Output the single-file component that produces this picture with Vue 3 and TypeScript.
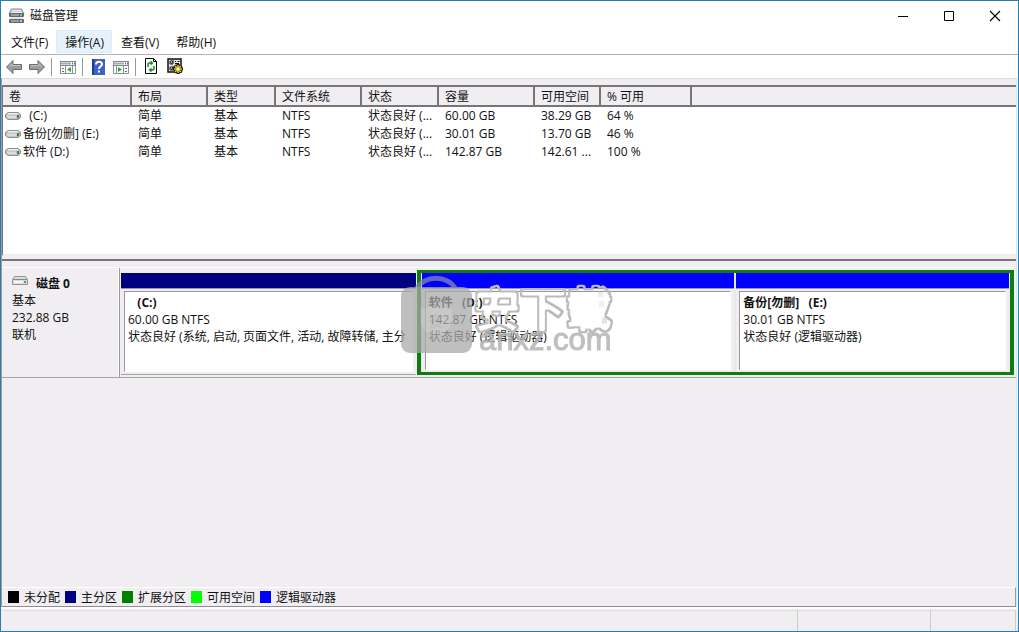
<script setup lang="ts">
import { ref } from 'vue'

interface Volume {
  name: string
  layout: string
  type: string
  fs: string
  status: string
  capacity: string
  free: string
  percent: string
}

const menus = ['文件(F)', '操作(A)', '查看(V)', '帮助(H)']
const activeMenu = ref(1)

const columns = ['卷', '布局', '类型', '文件系统', '状态', '容量', '可用空间', '% 可用']

const volumes: Volume[] = [
  { name: '\u00a0 (C:)', layout: '简单', type: '基本', fs: 'NTFS', status: '状态良好 (...', capacity: '60.00 GB', free: '38.29 GB', percent: '64 %' },
  { name: '备份[勿删] (E:)', layout: '简单', type: '基本', fs: 'NTFS', status: '状态良好 (...', capacity: '30.01 GB', free: '13.70 GB', percent: '46 %' },
  { name: '软件 (D:)', layout: '简单', type: '基本', fs: 'NTFS', status: '状态良好 (...', capacity: '142.87 GB', free: '142.61 ...', percent: '100 %' },
]

const logical = [
  { cls: 'part-d', name: '软件\u00a0\u00a0 (D:)', size: '142.87 GB NTFS', status: '状态良好 (逻辑驱动器)' },
  { cls: 'part-e', name: '备份[勿删]\u00a0\u00a0 (E:)', size: '30.01 GB NTFS', status: '状态良好 (逻辑驱动器)' },
]

const legend = [
  { label: '未分配', cls: 'black' },
  { label: '主分区', cls: 'navy' },
  { label: '扩展分区', cls: 'green' },
  { label: '可用空间', cls: 'lime' },
  { label: '逻辑驱动器', cls: 'blue' },
]
</script>

<template>
  <div class="window">
    <header class="titlebar">
      <svg class="app-icon" width="17" height="16" viewBox="0 0 17 16">
        <path d="M3.500 1h10l2.500 5H1z" fill="#c9cdd0" stroke="#888" />
        <path d="M4 2.500h9M3 4.500h11" stroke="#eee" />
        <rect x="1" y="5" width="15" height="4" rx="1" fill="#626a70" />
        <path d="M3 7h8" stroke="#cfd5d8" />
        <rect x="12" y="6" width="2" height="2" fill="#5fd06a" />
        <path d="M3 9h11l2 2H1z" fill="#e4e6e8" />
        <rect x="1" y="11" width="15" height="4" rx="1" fill="#626a70" />
        <path d="M3 13h8" stroke="#cfd5d8" />
        <rect x="12" y="12" width="2" height="2" fill="#9edca4" />
      </svg>
      <h1>磁盘管理</h1>
      <div class="win-buttons">
        <button type="button" aria-label="最小化">
          <svg width="12" height="12" viewBox="0 0 12 12"><path d="M1 6.500h10" stroke="#000" /></svg>
        </button>
        <button type="button" aria-label="最大化">
          <svg width="12" height="12" viewBox="0 0 12 12"><path d="M1.500 1.500h9v9h-9z" fill="none" stroke="#000" /></svg>
        </button>
        <button type="button" aria-label="关闭">
          <svg width="12" height="12" viewBox="0 0 12 12"><path d="M1 1l10 10M11 1L1 11" stroke="#000" stroke-width="1.100" /></svg>
        </button>
      </div>
    </header>

    <nav class="menubar">
      <button
        v-for="(m, i) in menus"
        :key="m"
        type="button"
        :class="{ active: i === activeMenu }"
        @click="activeMenu = i"
      >{{ m }}</button>
    </nav>

    <div class="toolbar">
      <button type="button" aria-label="后退">
        <svg width="18" height="16" viewBox="0 0 18 16">
          <path d="M1.500 8L8 1.500v4h8.500v5H8v4z" fill="#9c9c9c" stroke="#6c6c6c" />
          <path d="M4 7.500L7 5v1.500h8" fill="none" stroke="#c4c4c4" />
        </svg>
      </button>
      <button type="button" aria-label="前进" class="forward">
        <svg width="18" height="16" viewBox="0 0 18 16">
          <path d="M16.500 8L10 1.500v4H1.500v5H10v4z" fill="#9c9c9c" stroke="#6c6c6c" />
          <path d="M14 7.500L11 5v1.500H3" fill="none" stroke="#c4c4c4" />
        </svg>
      </button>
      <span class="sep"></span>
      <button type="button" aria-label="显示控制台树">
        <svg width="17" height="16" viewBox="0 0 17 16">
          <path d="M.5 2.500h15v12H.5z" fill="#fff" stroke="#8b9199" />
          <path d="M0 2.500h16M0 6.500h16" stroke="#7e8893" />
          <path d="M1 4.500h10" stroke="#a4abb3" stroke-width="2" />
          <path d="M12 4.500h1M14 4.500h1" stroke="#667" stroke-width="2" />
          <path d="M5.500 7v7M12.500 7v7" stroke="#8b9199" />
          <path d="M2 9.500h2M2 12.500h2" stroke="#5f6c86" />
          <path d="M11 8v5l-4-2.500z" fill="#36a32b" />
        </svg>
      </button>
      <span class="sep"></span>
      <button type="button" aria-label="帮助">
        <svg width="14" height="16" viewBox="0 0 14 16">
          <rect x="1" y="0" width="13" height="16" fill="#3b62c4" />
          <path d="M1 0h2v16H1z" fill="#1d3e91" />
          <path d="M5 5.500C5 2 11 2 11 5c0 2.500-3 2.300-3 5" fill="none" stroke="#fff" stroke-width="2" />
          <rect x="7" y="11.500" width="2" height="2" fill="#fff" />
        </svg>
      </button>
      <button type="button" aria-label="显示操作窗格" class="pane-btn">
        <svg width="17" height="16" viewBox="0 0 17 16">
          <path d="M.5 2.500h15v12H.5z" fill="#fff" stroke="#8b9199" />
          <path d="M0 2.500h16M0 6.500h16" stroke="#7e8893" />
          <path d="M1 4.500h10" stroke="#a4abb3" stroke-width="2" />
          <path d="M12 4.500h1M14 4.500h1" stroke="#667" stroke-width="2" />
          <path d="M3.500 7v7M10.500 7v7" stroke="#8b9199" />
          <path d="M12 9.500h2M12 12.500h2" stroke="#5f6c86" />
          <path d="M5 8v5l4-2.500z" fill="#36a32b" />
        </svg>
      </button>
      <span class="sep"></span>
      <button type="button" aria-label="刷新">
        <svg width="14" height="17" viewBox="0 0 14 17">
          <path d="M1.500.500h8l3 3v12h-11z" fill="#fff" stroke="#000" />
          <path d="M9.500.500v3h3" fill="none" stroke="#000" />
          <path d="M4 9V6.500Q4 5 6 5h1" fill="none" stroke="#178a24" stroke-width="1.500" />
          <path d="M6.500 2.500l3 2.500-3 2.500z" fill="#178a24" />
          <path d="M10 8v2.500q0 1.500-2 1.500H7" fill="none" stroke="#178a24" stroke-width="1.500" />
          <path d="M7.500 9.500l-3 2.500 3 2.500z" fill="#178a24" />
        </svg>
      </button>
      <button type="button" aria-label="设置" class="settings">
        <svg width="17" height="17" viewBox="0 0 17 17">
          <path d="M1 1h13v13H1z" fill="#e4e4e4" stroke="#111" stroke-width="1.500" />
          <path d="M3 3h3v3H3zM3 9h3v3H3z" fill="#fff" stroke="#222" />
          <path d="M3.500 4.500l1 1 2-3M3.500 10.500l1 1 2-3M8 3.500h1M10.500 3.500h2M8 5.500h4" fill="none" stroke="#111" />
          <path d="M11 6v10M6 11h10M7.500 7.500l7 7M14.500 7.500l-7 7" stroke="#111" stroke-width="3" />
          <path d="M11 7v8M7 11h8M8 8l6 6M14 8l-6 6" stroke="#e9cf25" stroke-width="1.500" />
          <circle cx="11" cy="11" r="2" fill="#fff" stroke="#cdb000" />
        </svg>
      </button>
    </div>

    <main class="content">
      <section class="volume-pane">
        <table>
          <colgroup>
            <col v-for="n in 9" :key="n" :class="'c' + n" />
          </colgroup>
          <thead>
            <tr>
              <th v-for="c in columns" :key="c" scope="col">{{ c }}</th>
              <td class="filler"></td>
            </tr>
          </thead>
          <tbody>
            <tr v-for="v in volumes" :key="v.name">
              <td class="name">
                <svg class="drive" width="16" height="10" viewBox="0 0 16 10">
                  <path d="M3 1.500h10l2.500 2v3L13 8.500H3L.5 6.500v-3z" fill="#b5b5b7" stroke="#8c8c8f" />
                  <path d="M3.500 2h9L14 3.500H2z" fill="#f2f2f2" />
                  <path d="M1.500 4.500h10v3h-9z" fill="#dcdcde" />
                  <rect x="12" y="4" width="2" height="3" fill="#39844d" />
                </svg>{{ v.name }}
              </td>
              <td>{{ v.layout }}</td>
              <td>{{ v.type }}</td>
              <td>{{ v.fs }}</td>
              <td>{{ v.status }}</td>
              <td>{{ v.capacity }}</td>
              <td>{{ v.free }}</td>
              <td>{{ v.percent }}</td>
              <td></td>
            </tr>
          </tbody>
        </table>
      </section>

      <section class="disk-pane">
        <div class="disk-row">
          <div class="disk-label">
            <h2>
              <svg width="16" height="10" viewBox="0 0 16 10">
                <path d="M2.500.500h11l2 3v5H.5v-5z" fill="#d9dddb" stroke="#929694" />
                <path d="M1 3.500h14" stroke="#888" />
                <path d="M2 6h9" stroke="#f6f6f6" stroke-width="2" />
                <rect x="12" y="5" width="2" height="2" fill="#3eaa59" />
              </svg>
              <span>磁盘 0</span>
            </h2>
            <p>基本</p>
            <p>232.88 GB</p>
            <p>联机</p>
          </div>
          <div class="partitions">
            <article class="partition primary">
              <div class="strip"></div>
              <div class="body">
                <h3>&nbsp;&nbsp; (C:)</h3>
                <p>60.00 GB NTFS</p>
                <p>状态良好 (系统, 启动, 页面文件, 活动, 故障转储, 主分</p>
              </div>
            </article>
            <div class="extended">
              <article v-for="p in logical" :key="p.cls" class="partition" :class="p.cls">
                <div class="strip"></div>
                <div class="body">
                  <h3>{{ p.name }}</h3>
                  <p>{{ p.size }}</p>
                  <p>{{ p.status }}</p>
                </div>
              </article>
            </div>
          </div>
        </div>

        <svg class="watermark" width="220" height="86" viewBox="0 0 220 86">
          <defs>
            <filter id="ring" x="-5%" y="-5%" width="110%" height="110%" color-interpolation-filters="sRGB">
              <feMorphology in="SourceGraphic" operator="erode" radius="2" result="inner" />
              <feComposite in="SourceGraphic" in2="inner" operator="out" />
            </filter>
          </defs>
          <g opacity=".74">
            <path d="M17 17a21 17 0 0 1 38 0" fill="none" stroke="#8c88b4" stroke-width="5" />
            <rect x="1" y="16" width="71" height="66" rx="9" fill="#aaa" />
            <path d="M36 32q8 6 16 6v12q-2 11-16 16q-14-5-16-16V38q8 0 16-6z" fill="#b6b6b6" />
            <text x="28" y="56" class="mark-small">安</text>
          </g>
          <text x="74" y="55" class="mark-cjk" filter="url(#ring)">安下载</text>
          <text x="79" y="79" class="mark-latin">anxz.com</text>
        </svg>
      </section>

      <ul class="legend">
        <li v-for="l in legend" :key="l.label"><i :class="l.cls"></i>{{ l.label }}</li>
      </ul>
    </main>

    <footer class="statusbar">
      <span class="grow"></span>
      <span class="mid"></span>
      <span class="end"></span>
    </footer>
  </div>
</template>

<style>
body {
  margin: 0;
}
</style>

<style scoped>
* {
  box-sizing: border-box;
}
.window {
  display: flex;
  flex-direction: column;
  min-height: 100vh;
  border: 1px solid #2c7cae;
  background: #fff;
  color: #111;
  font: 12px/17px "Open Sans", "Noto Sans CJK SC", sans-serif;
}
h1, h2, h3, p, ul {
  margin: 0;
  padding: 0;
  font-size: 12px;
}
svg {
  display: block;
  flex: none;
}
button {
  border: 0;
  padding: 0;
  background: none;
  font: inherit;
  color: inherit;
}
.titlebar {
  display: flex;
  align-items: center;
  height: 29px;
  padding-left: 7px;
}
h1 {
  margin-left: 5px;
  font-weight: 400;
}
.win-buttons {
  display: flex;
  margin-left: auto;
}
.win-buttons button {
  display: grid;
  place-items: center;
  width: 46px;
  height: 29px;
}
.menubar {
  display: flex;
  height: 25px;
  padding-left: 1px;
  border-bottom: 1px solid #b0b0b0;
}
.menubar button {
  height: 23px;
  padding: 2px 7px 0 8px;
  border: 1px solid transparent;
}
.menubar button.active {
  background: #e5f1fb;
  border-color: #dcecf9;
}
.toolbar {
  display: flex;
  align-items: center;
  height: 23px;
  padding-left: 4px;
}
.forward {
  margin-left: 5px;
}
.sep {
  width: 1px;
  height: 18px;
  margin: 0 8px 0 5px;
  background: #999;
}
.pane-btn {
  margin-left: 8px;
}
.settings {
  margin-left: 9px;
}
.content {
  flex: 1;
  display: flex;
  flex-direction: column;
  padding: 6px 0 0;
  margin-right: 1px;
  border-top: 1px solid #ddd;
  border-right: 1px solid #c2eef8;
  border-left: 1px solid #9a9aa2;
  background: #f0eef1;
}
.volume-pane {
  height: 171px;
  border-top: 2px solid #77757a;
  border-left: 1px solid #77757a;
  border-bottom: 2px solid #f0eef1;
  background: #fff;
}
table {
  width: 100%;
  table-layout: fixed;
  border-collapse: separate;
  border-spacing: 0;
}
.c1 { width: 129px; }
.c2 { width: 76px; }
.c3 { width: 68px; }
.c4 { width: 86px; }
.c5 { width: 77px; }
.c6 { width: 96px; }
.c7 { width: 66px; }
.c8 { width: 91px; }
th, td {
  padding: 0 0 0 6px;
  text-align: left;
  font-weight: 400;
  white-space: nowrap;
  overflow: hidden;
}
th, .filler {
  height: 20px;
  background: #f0eef1;
  border-bottom: 2px solid #77757a;
}
th {
  padding-top: 1px;
  border-right: 2px solid #77757a;
}
tbody td {
  height: 18px;
  line-height: 18px;
}
tbody .name {
  display: flex;
  align-items: center;
  gap: 2px;
  padding-left: 2px;
}
.disk-pane {
  position: relative;
  flex: 1;
  margin-top: 3px;
  border-top: 2px solid #77757a;
  padding-top: 6px;
}
.disk-row {
  display: flex;
  height: 111px;
  border-top: 1px solid #fff;
  border-bottom: 1px solid #a5a5a8;
}
.disk-label {
  width: 117px;
  padding: 7px 0 0 10px;
  border-right: 1px solid #fff;
}
.disk-label h2 {
  display: flex;
  gap: 8px;
}
.disk-label h2 svg {
  margin-top: 1px;
}
.partitions {
  flex: 1;
  min-width: 0;
  display: flex;
  gap: 1px;
  padding: 2px 2px 2px 1px;
  border-left: 1px solid #99979c;
}
.partition {
  min-width: 0;
  display: flex;
  flex-direction: column;
  border-bottom: 1px solid #a5a5a8;
}
.primary {
  flex: 295;
  padding-top: 3px;
}
.primary .strip {
  background: #000080;
}
.extended {
  flex: 588;
  min-width: 0;
  display: flex;
  gap: 2px;
  border: solid #107c10;
  border-width: 3px 4px 3px 4px;
  padding: 0 1px;
  background: #e4eae4;
}
.extended .partition {
  border-bottom: 0;
  background: #f0eef1;
}
.part-d {
  flex: 313;
}
.part-e {
  flex: 273;
}
.strip {
  height: 16px;
  border-bottom: 1px solid #99979c;
  background: #0000ff;
}
.body {
  flex: 1;
  margin: 2px 3px;
  padding: 2px 0 0 3px;
  overflow: hidden;
  white-space: nowrap;
  background: #fff;
  border: 1px solid #99979c;
  border-right-color: #fff;
  border-bottom-color: #fff;
}
.watermark {
  position: absolute;
  left: 398px;
  top: 10px;
  pointer-events: none;
}
.mark-cjk {
  font: 500 46px "Noto Sans CJK SC", sans-serif;
  fill: #bbb;
  stroke: #bbb;
  stroke-width: 5px;
  stroke-linejoin: round;
}
.mark-latin {
  font: 31px "Liberation Sans", sans-serif;
  fill: #b4b4b4;
  stroke: #b4b4b4;
  stroke-width: 1px;
  opacity: .85;
}
.mark-small {
  font: 700 16px "Noto Sans CJK SC", sans-serif;
  fill: #aaa;
}
.legend {
  display: flex;
  align-items: center;
  gap: 5px;
  height: 20px;
  padding-left: 6px;
  list-style: none;
  border-top: 1px solid #fff;
  border-right: 1px solid #999;
  border-bottom: 1px solid #8f8d92;
}
.legend li {
  display: flex;
  align-items: center;
  gap: 5px;
}
.legend i {
  width: 11px;
  height: 12px;
}
.black { background: #000; }
.navy { background: #000080; }
.green { background: #008000; }
.lime { background: #00ff00; }
.blue { background: #0000ff; }
.statusbar {
  display: flex;
  height: 24px;
  padding: 1px 2px 0 0;
  border-top: 2px solid #fff;
  background: #f0eef1;
}
.statusbar span {
  border-top: 1px solid #ddd;
  border-right: 1px solid #ccc;
}
.grow { flex: 1; }
.mid { width: 133px; }
.end { width: 85px; }
</style>
